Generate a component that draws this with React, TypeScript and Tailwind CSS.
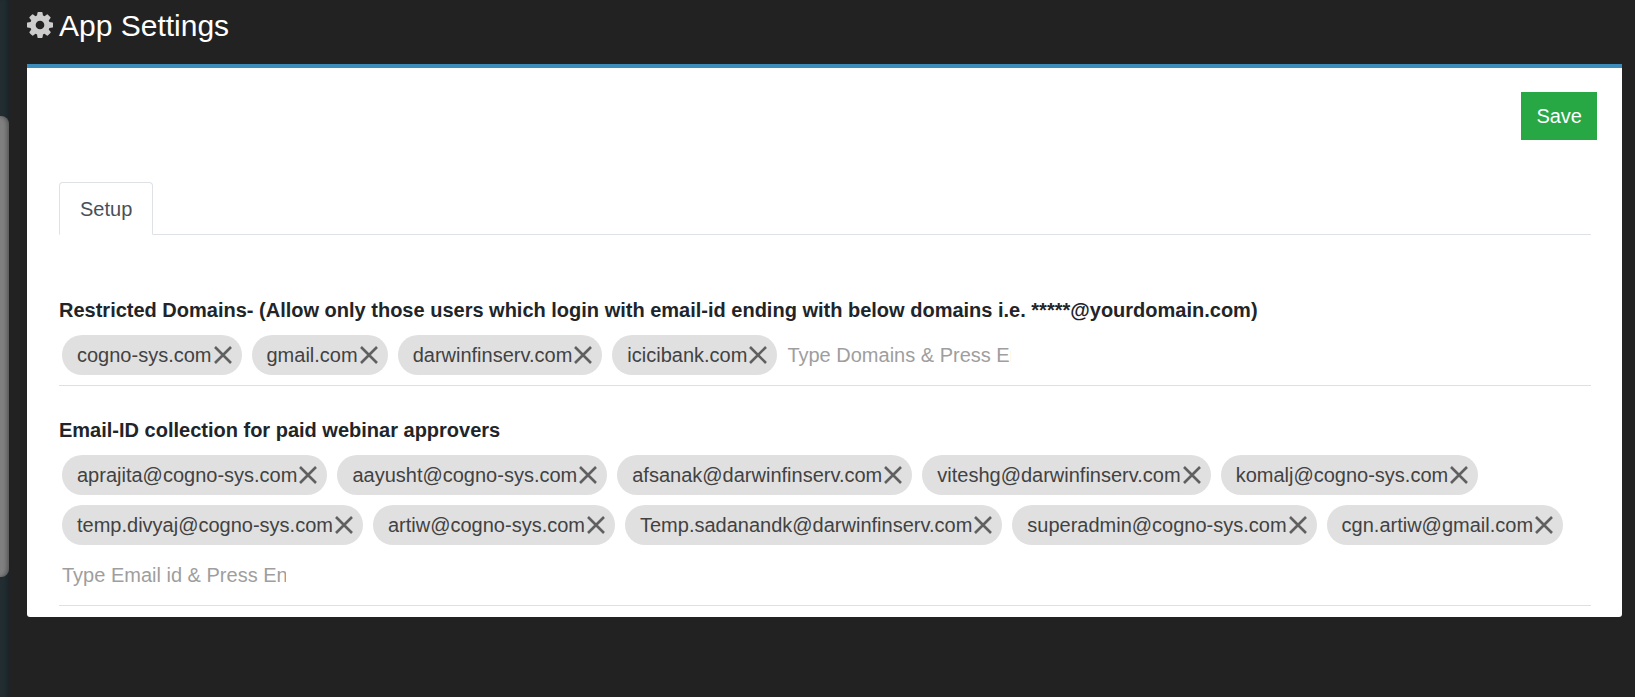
import { useState } from "react";
import type { KeyboardEvent } from "react";

const initialDomains = ["cogno-sys.com", "gmail.com", "darwinfinserv.com", "icicibank.com"];

const initialApprovers = [
  "aprajita@cogno-sys.com",
  "aayusht@cogno-sys.com",
  "afsanak@darwinfinserv.com",
  "viteshg@darwinfinserv.com",
  "komalj@cogno-sys.com",
  "temp.divyaj@cogno-sys.com",
  "artiw@cogno-sys.com",
  "Temp.sadanandk@darwinfinserv.com",
  "superadmin@cogno-sys.com",
  "cgn.artiw@gmail.com",
];

function CogIcon() {
  return (
    <svg viewBox="128 128 1536 1536" className="size-[26px] fill-[#cccccc]" aria-hidden="true">
      <path d="M1152 896q0-106-75-181t-181-75-181 75-75 181 75 181 181 75 181-75 75-181zm512-109v222q0 12-8 23t-20 13l-185 28q-19 54-39 91 35 50 107 138 10 12 10 25t-9 23q-27 37-99 108t-94 71q-12 0-26-9l-138-108q-44 23-91 38-16 136-29 186-7 28-36 28h-222q-14 0-24.5-8.5t-11.5-21.5l-28-184q-49-16-90-37l-141 107q-10 9-25 9-14 0-25-11-126-114-165-168-7-10-7-23 0-12 8-23 15-21 51-66.5t54-70.5q-27-50-41-99l-183-27q-13-2-21-12.5t-8-23.5v-222q0-12 8-23t19-13l186-28q14-46 39-92-40-57-107-138-10-12-10-24 0-10 9-23 26-36 98.5-107.5t94.5-71.5q13 0 26 10l138 107q44-23 91-38 16-136 29-186 7-28 36-28h222q14 0 24.5 8.5t11.5 21.5l28 184q49 16 90 37l142-107q9-9 24-9 13 0 25 10 129 119 165 170 7 8 7 22 0 12-8 23-15 21-51 66.5t-54 70.5q26 50 41 98l183 28q13 2 21 12.5t8 23.5z" />
    </svg>
  );
}

interface ChipFieldProps {
  id: string;
  label: string;
  placeholder: string;
  initial: string[];
}

function ChipField({ id, label, placeholder, initial }: ChipFieldProps) {
  const [chips, setChips] = useState(initial);
  const [draft, setDraft] = useState("");

  function handleKeyDown(event: KeyboardEvent<HTMLInputElement>) {
    const value = draft.trim();
    if (event.key === "Enter" && value) {
      setChips([...chips, value]);
      setDraft("");
    }
  }

  return (
    <div>
      <label htmlFor={id} className="block text-xl leading-[30px] font-bold text-[#212529]">
        {label}
      </label>
      <div className="mt-2.5 flex flex-wrap gap-2.5 border-b border-[#e0e0e0] pb-2.5 pl-[3px]">
        {chips.map((chip) => (
          <span
            key={chip}
            className="flex h-10 items-center gap-0.5 rounded-full bg-[#e0e0e0] pr-2.5 pl-[15px] text-xl text-[#424242]"
          >
            {chip}
            <button
              type="button"
              aria-label={`Remove ${chip}`}
              onClick={() => setChips(chips.filter((other) => other !== chip))}
              className="text-[#606060]"
            >
              <svg viewBox="0 0 18 18" className="size-[18px]" fill="none" stroke="currentColor" strokeWidth="2.6" aria-hidden="true">
                <path d="M1 1L17 17M17 1L1 17" />
              </svg>
            </button>
          </span>
        ))}
        <input
          id={id}
          type="text"
          value={draft}
          onChange={(event) => setDraft(event.target.value)}
          onKeyDown={handleKeyDown}
          placeholder={placeholder}
          className="h-10 w-56 bg-transparent text-xl text-[#424242] outline-none placeholder:text-[#9e9e9e]"
        />
      </div>
    </div>
  );
}

export default function App() {
  return (
    <div className="flex min-h-screen bg-[#222222] font-['Liberation_Sans',Arial,sans-serif]">
      <aside className="w-[9px] shrink-0 bg-[#222d32] pt-[116px] shadow-[inset_-4px_0_4px_-2px_rgba(0,0,0,0.25)]">
        <div className="h-[461px] rounded-r-lg bg-[#808080] shadow-[inset_-3px_0_4px_-1px_rgba(0,0,0,0.35)]" />
      </aside>
      <main className="min-w-0 flex-1 pr-[13px] pl-[18px]">
        <h1 className="flex h-16 items-center gap-1.5 pb-3.5 text-[30px] text-white">
          <CogIcon />
          App Settings
        </h1>
        <section className="rounded-b-[3px] border-t-4 border-[#3c8dbc] bg-white pt-6 pb-[11px]">
          <div className="flex justify-end pr-[25px]">
            <button type="button" className="h-12 bg-[#28a745] px-[15px] text-xl text-white">
              Save
            </button>
          </div>
          <div className="mt-[42px] mr-[31px] ml-8">
            <div role="tablist" className="flex border-b border-[#dee2e6]">
              <button
                type="button"
                role="tab"
                aria-selected="true"
                className="-mb-px h-[53px] rounded-t border border-[#dee2e6] border-b-white bg-white px-5 text-xl text-[#495057]"
              >
                Setup
              </button>
            </div>
            <div role="tabpanel" className="flex flex-col gap-[29px] pt-[60px]">
              <ChipField
                id="restricted-domains"
                label="Restricted Domains- (Allow only those users which login with email-id ending with below domains i.e. *****@yourdomain.com)"
                placeholder="Type Domains & Press Enter"
                initial={initialDomains}
              />
              <ChipField
                id="webinar-approvers"
                label="Email-ID collection for paid webinar approvers"
                placeholder="Type Email id & Press Enter"
                initial={initialApprovers}
              />
            </div>
          </div>
        </section>
      </main>
    </div>
  );
}
